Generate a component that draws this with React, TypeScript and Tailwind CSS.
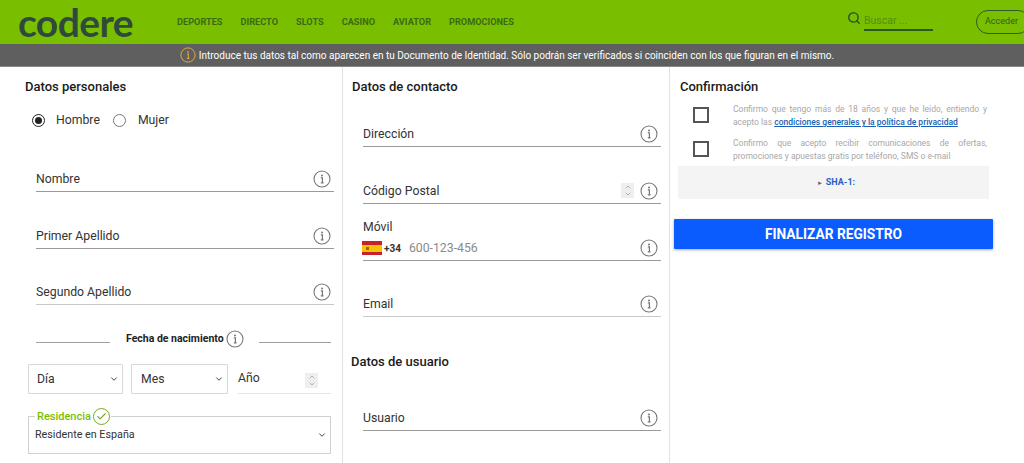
import React from "react";
import { Search, ChevronDown, ChevronUp, Check } from "lucide-react";

const Info = ({ color = "#777777", size = 18 }: { color?: string; size?: number }) => (
  <svg width={size} height={size} viewBox="0 0 18 18" fill="none" className="shrink-0">
    <circle cx="9" cy="9" r="8" stroke={color} strokeWidth="1.1" />
    <circle cx="9" cy="5.4" r="1" fill={color} />
    <path d="M7.8 7.8H9.4V12.6M7.8 12.8H10.6" stroke={color} strokeWidth="1.2" />
  </svg>
);

const Stepper = () => (
  <span className="flex h-[15px] w-[13px] shrink-0 flex-col items-center justify-center bg-[#eeeeee] text-[#777777]">
    <ChevronUp size={8} strokeWidth={1.5} className="-mb-[1px]" />
    <ChevronDown size={8} strokeWidth={1.5} />
  </span>
);

const Field = ({ label, mt, stepper, light }: { label: string; mt: string; stepper?: boolean; light?: boolean }) => (
  <div className={`flex h-[28px] items-center border-b pt-[2px] ${light ? "border-[#c8c8c8]" : "border-[#9a9a9a]"} text-[12.25px] text-[#333333] ${mt}`}>
    <span className="flex-1 pt-[1px]">{label}</span>
    {stepper && <span className="mr-[6px]"><Stepper /></span>}
    <span className="mr-[3px]"><Info /></span>
  </div>
);

const Heading = ({ children, className = "" }: { children: React.ReactNode; className?: string }) => (
  <h2 className={`text-[13px] leading-[18px] font-medium text-[#1a1a1a] ${className}`}>{children}</h2>
);

const Select = ({ label, width, pad }: { label: string; width: string; pad: string }) => (
  <div className={`flex h-[30px] items-center justify-between rounded-[1px] border border-[#d8d8d8] pr-[3px] text-[12.25px] text-[#333333] ${pad} ${width}`}>
    <span>{label}</span>
    <ChevronDown size={10} strokeWidth={2.4} className="text-[#444444]" />
  </div>
);

const nav = ["DEPORTES", "DIRECTO", "SLOTS", "CASINO", "AVIATOR", "PROMOCIONES"];

export default function App() {
  return (
    <div className="h-[463px] w-[1024px] overflow-hidden bg-white font-['Roboto',sans-serif]">
      <header className="flex h-[44px] items-center bg-[#79bf00] pl-[18px]">
        <span className="w-[159px] font-['Lato',sans-serif] text-[39px] leading-[44px] font-bold tracking-[-0.6px] text-[#2f4a3c]">codere</span>
        <nav className="flex gap-[18px] pb-[1px] text-[9.2px] font-bold text-[#3b6b14]">
          {nav.map((n) => (
            <span key={n}>{n}</span>
          ))}
        </nav>
        <div className="ml-auto flex items-start pb-[3px]">
          <Search size={14} strokeWidth={2.6} className="mt-[1px] mr-[3px] text-[#2f5a2c]" />
          <span className="mt-[3px] w-[69px] border-b-2 border-[#2b5a1e] pb-[1px] text-[10.5px] text-[#4f8f10]">Buscar ...</span>
        </div>
        <div className="ml-[43px] -mr-[6px] flex h-[24px] w-[54px] shrink-0 items-center rounded-full border border-[#2f5a2c] pl-[8px] text-[9px] text-[#2f5a2c]">Acceder</div>
      </header>

      <div className="flex h-[23px] items-center justify-center border-b border-[#8a8a8a] bg-[#5f5f5f] pr-[10px] text-[10px] text-white">
        <span className="mr-[3px]"><Info color="#e2aa3c" size={16} /></span>
        Introduce tus datos tal como aparecen en tu Documento de Identidad. Sólo podrán ser verificados si coinciden con los que figuran en el mismo.
      </div>

      <main className="flex h-[396px]">
        <section className="w-[343px] shrink-0 border-r border-[#e2e2e2] pl-[25px] pr-[8px] pt-[11px]">
          <Heading>Datos personales</Heading>
          <div className="mt-[15px] flex h-[18px] items-center pl-[7px] text-[12.25px] text-[#333333]">
            <span className="flex h-[13px] w-[13px] items-center justify-center rounded-full border border-[#222222]">
              <span className="h-[7px] w-[7px] rounded-full bg-[#222222]" />
            </span>
            <span className="ml-[11px]">Hombre</span>
            <span className="ml-[13px] h-[13px] w-[13px] rounded-full border border-[#777777]" />
            <span className="ml-[12px]">Mujer</span>
          </div>
          <div className="pl-[11px]">
            <Field label="Nombre" mt="mt-[35px]" />
            <Field label="Primer Apellido" mt="mt-[29px]" />
            <Field label="Segundo Apellido" mt="mt-[28px]" light />
          </div>
          <div className="mt-[25px] flex h-[18px] items-center whitespace-nowrap pl-[11px] text-[10.5px] font-bold text-[#222222]">
            <span className="mt-[6px] h-px w-[74px] shrink-0 bg-[#a0a0a0]" />
            <span className="ml-[16px]">Fecha de nacimiento</span>
            <span className="ml-[2px]"><Info /></span>
            <span className="ml-[15px] mt-[6px] h-px w-[72px] shrink-0 bg-[#a0a0a0]" />
          </div>
          <div className="mt-[16px] ml-[3px] flex gap-[8px]">
            <Select label="Día" width="w-[95px]" pad="pl-[8px]" />
            <Select label="Mes" width="w-[97px]" pad="pl-[9px]" />
            <div className="ml-[2px] flex h-[30px] w-[93px] items-center justify-between border-b border-[#e4e4e4] pr-[13px] text-[12.25px] text-[#333333]">
              <span>Año</span>
              <span className="mt-[3px]"><Stepper /></span>
            </div>
          </div>
          <div className="relative mt-[22px] ml-[3px] flex h-[38px] w-[303px] items-center justify-between border border-[#d0d0d0] pl-[6px] pr-[3px] text-[10.75px] text-[#333333]">
            <span>Residente en España</span>
            <ChevronDown size={10} strokeWidth={2.4} className="text-[#444444]" />
            <span className="absolute -top-[8px] left-[6px] flex items-center bg-white pl-[2px] pr-[1px] text-[11px] leading-[14px] font-medium text-[#79bf00]">
              Residencia
              <span className="ml-[2px] -mt-[1px] flex h-[17px] w-[17px] items-center justify-center rounded-full border-[1.5px] border-[#79a82c]">
                <Check size={11} strokeWidth={2.5} className="text-[#79a82c]" />
              </span>
            </span>
          </div>
        </section>

        <section className="w-[327px] shrink-0 border-r border-[#e2e2e2] pl-[9px] pr-[8px] pt-[11px]">
          <Heading>Datos de contacto</Heading>
          <div className="pl-[11px]">
            <Field label="Dirección" mt="mt-[23px]" />
            <Field label="Código Postal" mt="mt-[29px]" stepper />
            <div className="mt-[14px] text-[12.25px] leading-[18px] text-[#333333]">Móvil</div>
            <div className="flex h-[25px] items-center border-b border-[#9a9a9a] text-[12.25px]">
              <span className="-ml-[1px] flex h-[14px] w-[20px] shrink-0 flex-col">
                <span className="h-[3.5px] bg-[#c8202c]" />
                <span className="relative h-[7px] bg-[#f5c400]">
                  <span className="absolute left-[4px] top-[2px] h-[3px] w-[3px] bg-[#b5502c]" />
                </span>
                <span className="h-[3.5px] bg-[#c8202c]" />
              </span>
              <span className="ml-[2px] text-[10px] font-bold text-[#333333]">+34</span>
              <span className="ml-[8px] flex-1 text-[#8a8a8a]">600-123-456</span>
              <span className="mr-[3px]"><Info /></span>
            </div>
            <Field label="Email" mt="mt-[28px]" light />
          </div>
          <Heading className="mt-[36px] -ml-[1px]">Datos de usuario</Heading>
          <div className="pl-[11px]">
            <Field label="Usuario" mt="mt-[32px]" />
          </div>
        </section>

        <section className="flex-1 pl-[4px] pt-[11px]">
          <Heading className="ml-[6px]">Confirmación</Heading>
          <div className="mt-[7px] ml-[19px] flex h-[34px] w-[294px]">
            <span className="mt-[4px] h-[16px] w-[16px] shrink-0 border-2 border-[#555555]" />
            <p className="ml-[24px] text-justify text-[8.5px] leading-[13px] text-[#a8a8a8]">
              Confirmo que tengo más de 18 años y que he leído, entiendo y acepto las{" "}
              <span className="font-medium text-[#1a5fb4] underline">condiciones generales y la política de privacidad</span>
            </p>
          </div>
          <div className="ml-[19px] flex h-[34px] w-[294px]">
            <span className="mt-[4px] h-[16px] w-[16px] shrink-0 border-2 border-[#555555]" />
            <p className="ml-[24px] text-justify text-[8.5px] leading-[13px] text-[#a8a8a8]">
              Confirmo que acepto recibir comunicaciones de ofertas, promociones y apuestas gratis por teléfono, SMS o e-mail
            </p>
          </div>
          <div className="mt-[-5px] ml-[4px] flex h-[33px] w-[311px] items-center justify-center bg-[#f4f4f4] pl-[5px] text-[9px] font-bold text-[#2a5fc4]">
            <span className="mr-[3px] text-[6px] text-[#666666]">►</span>SHA-1:
          </div>
          <button className="mt-[20px] flex h-[30px] w-[319px] items-center justify-center rounded-[1px] bg-[#0a5cff] text-[13.75px] font-bold text-white shadow-[0_1px_3px_rgba(0,0,0,0.35)]">
            FINALIZAR REGISTRO
          </button>
        </section>
      </main>
    </div>
  );
}
